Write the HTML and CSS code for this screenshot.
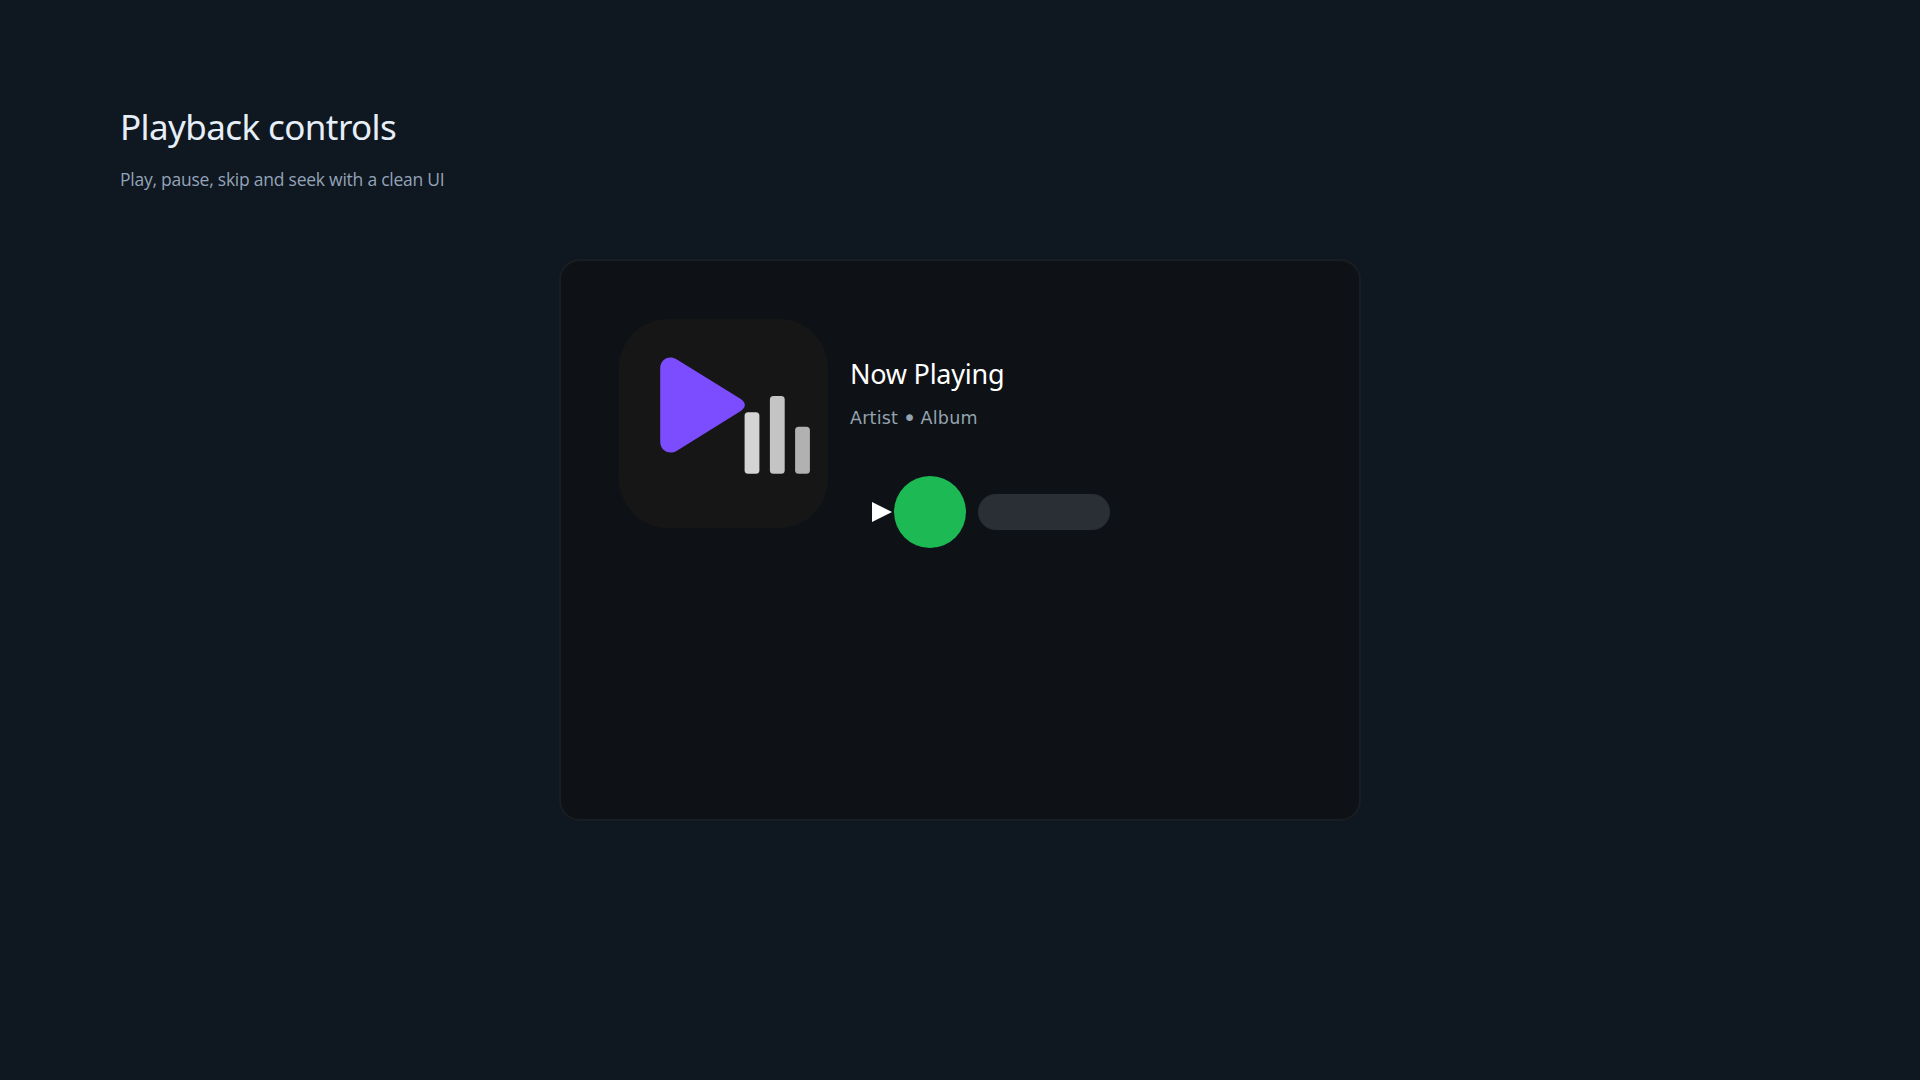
FILE: index.html
```html
<!DOCTYPE html>
<html lang="en">
<head>
<meta charset="utf-8">
<title>Playback controls</title>
<link rel="stylesheet" href="styles.css">
</head>
<body>
<header class="intro">
  <h1 class="intro-title">Playback controls</h1>
  <p class="intro-text">Play, pause, skip and seek with a clean UI</p>
</header>
<main class="player">
  <svg class="cover" viewBox="619 319 209 209" aria-hidden="true">
    <rect x="619" y="319" width="209" height="209" rx="49" fill="#161616"/>
    <path d="M660.2 368.5C660.2 359.8 668.5 354.800 676.500 359.200L740 398.500C746.500 402.500 746.500 407.500 740 411.500L676.500 451C668.500 455.300 660.2 450.300 660.2 441.500Z" fill="#7c4dff"/>
    <rect x="744.6" y="412.200" width="14.800" height="61.500" rx="3.500" fill="#d4d4d4"/>
    <rect x="769.900" y="396" width="14.800" height="77.700" rx="3.500" fill="#c4c4c4"/>
    <rect x="795.100" y="426.800" width="14.800" height="46.900" rx="3.500" fill="#b1b1b1"/>
  </svg>
  <section class="details">
    <h2 class="track">Now Playing</h2>
    <p class="artist">Artist <span class="dot">•</span> Album</p>
    <div class="controls">
      <svg class="arrow" viewBox="0 0 20 20" aria-hidden="true"><path d="M0 0L20 10L0 20Z" fill="#fff"/></svg>
      <span class="play"></span>
      <span class="seek"></span>
    </div>
  </section>
</main>
</body>
</html>
```
FILE: styles.css
```css
* { box-sizing: border-box; margin: 0; }
body {
  width: 1920px;
  height: 1080px;
  overflow: hidden;
  background: #0f1720;
  font-family: "Noto Sans", "Open Sans", sans-serif;
}
.intro { height: 259px; padding: 103px 0 0 120px; white-space: nowrap; }
.intro-title { font-size: 35px; line-height: 48px; font-weight: 400; letter-spacing: -0.6px; color: #e6eef8; }
.intro-text { margin-top: 16px; font-family: "Open Sans", sans-serif; font-size: 17.5px; line-height: 24px; letter-spacing: -0.24px; color: #94a3b8; }
.player {
  display: flex;
  gap: 22px;
  width: 802px;
  height: 562px;
  margin-left: 559px;
  padding: 58px;
  border: 2px solid #181e23;
  border-radius: 21px;
  background: #0e1115;
}
.cover { width: 209px; height: 209px; flex: none; }
.details { padding-top: 36px; white-space: nowrap; }
.track { font-size: 27px; line-height: 38px; font-weight: 400; letter-spacing: -0.25px; color: #fff; }
.artist { margin-top: 13px; font-family: "DejaVu Sans", sans-serif; font-size: 17.5px; line-height: 24px; letter-spacing: 0.2px; color: #94a3af; }
.dot { display: inline-block; width: 11px; font-size: 23px; line-height: 20px; text-indent: -1px; vertical-align: -2px; }
.controls { display: flex; align-items: center; height: 72px; margin: 46px 0 0 22px; }
.arrow { width: 20px; height: 20px; margin-right: 2px; }
.play { width: 72px; height: 72px; border-radius: 50%; background: #1db954; }
.seek { width: 132px; height: 36px; margin-left: 12px; border-radius: 18px; background: #2a2e35; }
```
